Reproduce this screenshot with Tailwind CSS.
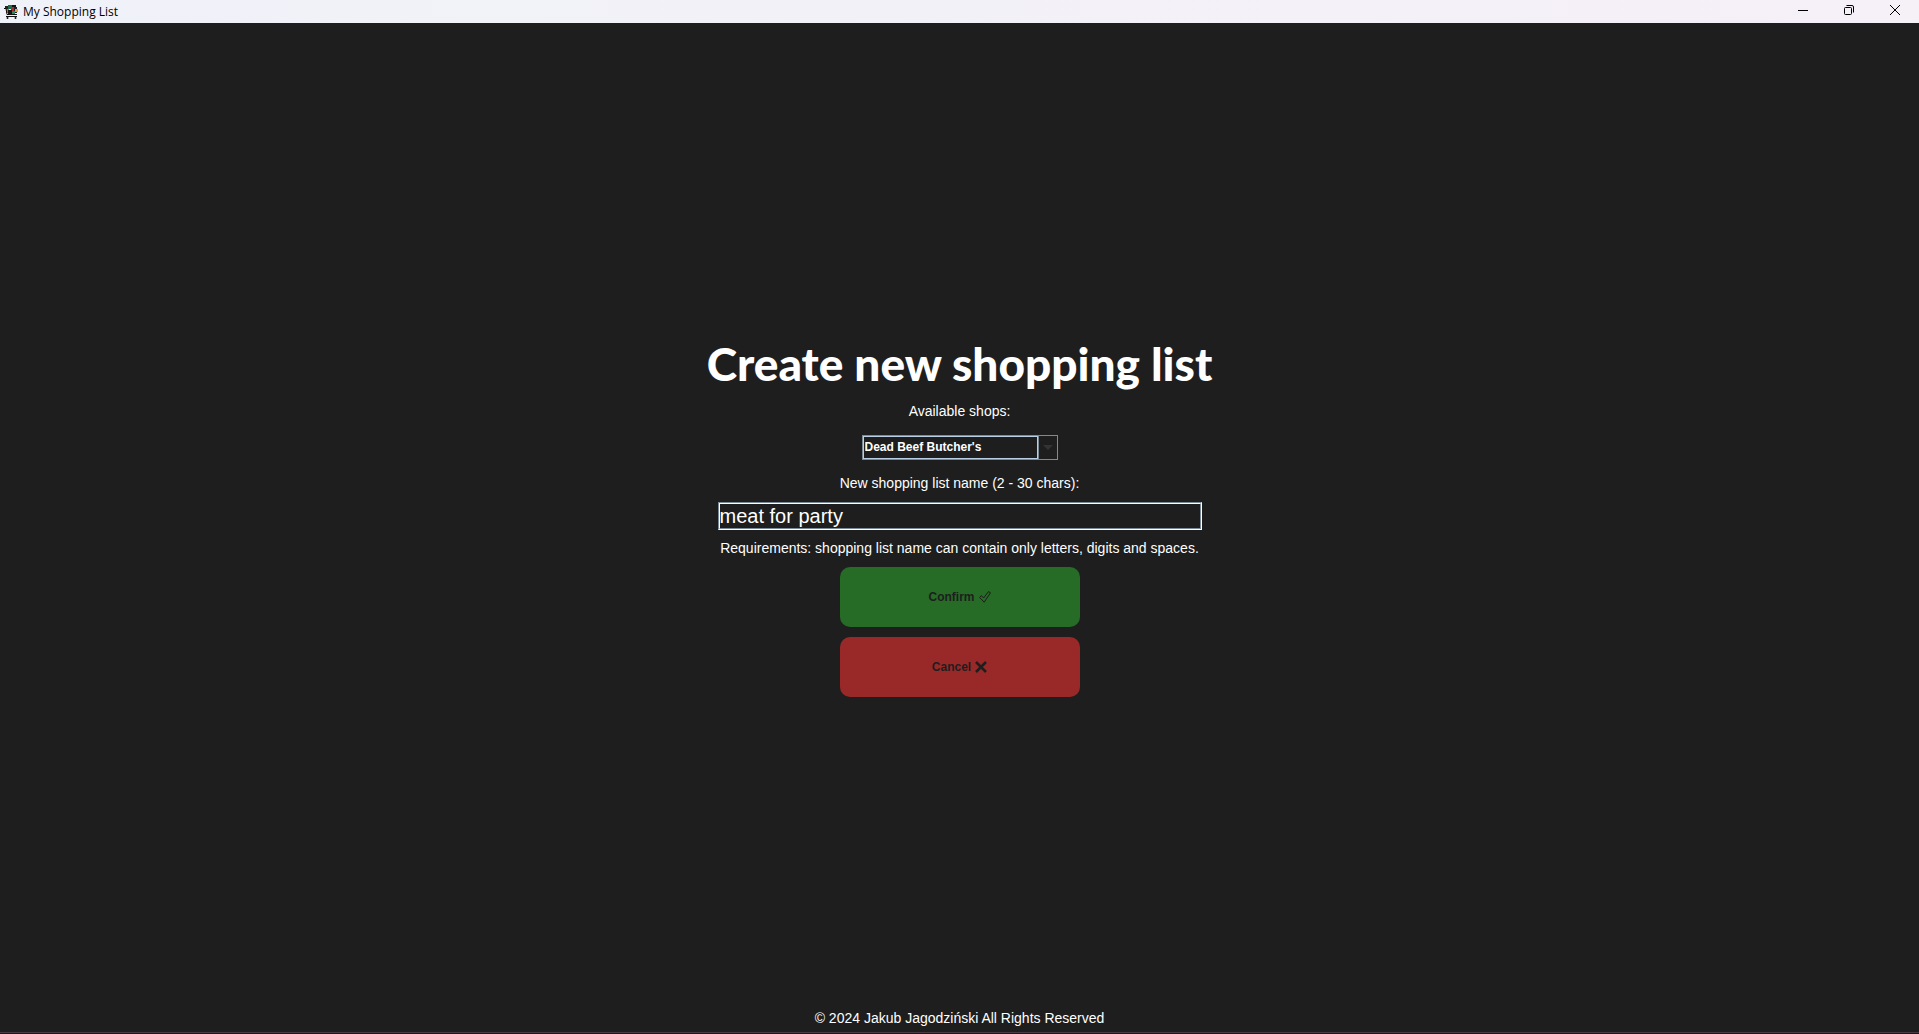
<!DOCTYPE html>
<html lang="en">
<head>
<meta charset="utf-8">
<title>My Shopping List</title>
<script src="https://cdn.jsdelivr.net/npm/@tailwindcss/browser@4"></script>
</head>
<body class="flex min-h-screen flex-col bg-[#1e1e1e] font-['Liberation_Sans',Arial,sans-serif] text-sm text-white">
  <header class="flex h-[23px] items-center bg-linear-to-r from-[#f0f2f9] to-[#f6f0f7] pr-px pl-1 text-black">
    <svg class="size-[14px]" viewBox="0 0 14 14" aria-hidden="true">
      <path d="M1 1h4v3H1z" fill="#222"/><path d="M4 0h4v4H4z" fill="#1d6b49"/><path d="M8 0h4v3H8z" fill="#111"/>
      <path d="M2 4h3v4H2z" fill="#d65b2c"/><path d="M7 2h3v5H7z" fill="#b3262e"/><path d="M10 2h3v6h-3z" fill="#20252c"/>
      <path d="M4 5h4v4H4z" fill="#151515"/><path d="M11 4h3v3h-3z" fill="#e8a13a"/><path d="M8 6h3v3H8z" fill="#2e8058"/>
      <path d="M0 3.500h2l1 6h10M2 11.500h11" fill="none" stroke="#111"/><circle cx="3.500" cy="13" r="1" fill="#111"/><circle cx="11.500" cy="13" r="1" fill="#111"/>
    </svg>
    <span class="ml-[5px] font-['Segoe_UI','Open_Sans',sans-serif] text-xs leading-4">My Shopping List</span>
    <div class="ml-auto flex h-full">
      <button class="flex w-[46px] items-center justify-center pb-1" aria-label="Minimize">
        <svg class="size-[10px]" viewBox="0 0 10 10" fill="none" stroke="#000"><path d="M0 5.500h10"/></svg>
      </button>
      <button class="flex w-[46px] items-center justify-center pb-1" aria-label="Restore">
        <svg class="size-[10px]" viewBox="0 0 10 10" fill="none" stroke="#000"><rect x=".5" y="2.500" width="7" height="7" rx="1"/><path d="M2.500.5H8Q9.500.5 9.500 2v5.500"/></svg>
      </button>
      <button class="flex w-[46px] items-center justify-center pb-1" aria-label="Close">
        <svg class="size-[10px]" viewBox="0 0 10 10" fill="none" stroke="#000"><path d="M0 0l10 10M10 0L0 10"/></svg>
      </button>
    </div>
  </header>

  <main class="flex flex-1 flex-col items-center justify-center pb-px">
    <h1 class="font-[Jokerman,Lato,sans-serif] text-[46px] leading-[60px] font-black">Create new shopping list</h1>
    <form class="flex flex-col items-center">
      <label for="shop" class="mt-[7px] leading-5">Available shops:</label>
      <div class="relative mt-[14px] flex h-[25px] w-[196px] border border-[#7a8a99]">
        <select id="shop" class="w-full appearance-none bg-[#1e1e1e] pl-[2px] text-xs font-bold text-white outline-none">
          <option>Dead Beef Butcher's</option>
        </select>
        <div class="pointer-events-none absolute inset-y-0 right-[19px] left-0 border border-[#b8cfe5]"></div>
        <div class="pointer-events-none absolute inset-y-0 right-0 flex w-[19px] items-center justify-center border-l border-[#7a8a99]">
          <svg class="h-[5px] w-[10px]" viewBox="0 0 10 5" fill="#333"><path d="M0 0h10L5 5z"/></svg>
        </div>
      </div>
      <label for="name" class="mt-[13px] leading-5">New shopping list name (2 - 30 chars):</label>
      <div class="mt-[9px] flex h-[28px] w-[484px] border border-t-[#7a8a99] border-r-white border-b-white border-l-[#7a8a99]">
        <input id="name" type="text" value="meat for party" class="w-full border border-t-white border-r-[#7a8a99] border-b-[#7a8a99] border-l-white bg-[#1e1e1e] text-xl leading-6 outline-none">
      </div>
      <p class="mt-[8px] leading-5">Requirements: shopping list name can contain only letters, digits and spaces.</p>
      <button type="submit" class="mt-[9px] flex h-[60px] w-[240px] items-center justify-center gap-1 rounded-[10px] bg-[#266b26] text-xs font-bold text-[#1e1e1e]">Confirm
        <svg class="size-3" viewBox="0 0 12 12" fill="none" stroke="#1e1e1e"><path d="M.6 6.500L2.400 4.600 4.600 7 9.500.6 11.500 1.800 5.200 11.200z" stroke-linejoin="round"/></svg>
      </button>
      <button type="button" class="mt-[10px] flex h-[60px] w-[240px] items-center justify-center gap-1 rounded-[10px] bg-[#992929] text-xs font-bold text-[#1e1e1e]">Cancel
        <svg class="size-3" viewBox="0 0 12 12" fill="none" stroke="#1e1e1e" stroke-width="2.500"><path d="M1 1l10 10M11 1L1 11"/></svg>
      </button>
    </form>
  </main>

  <footer class="pb-[4px] text-center leading-5">© 2024 Jakub Jagodziński All Rights Reserved</footer>
  <div class="h-[2px] border-t border-[#4a3a42] bg-[#2a0f1c]"></div>
</body>
</html>
